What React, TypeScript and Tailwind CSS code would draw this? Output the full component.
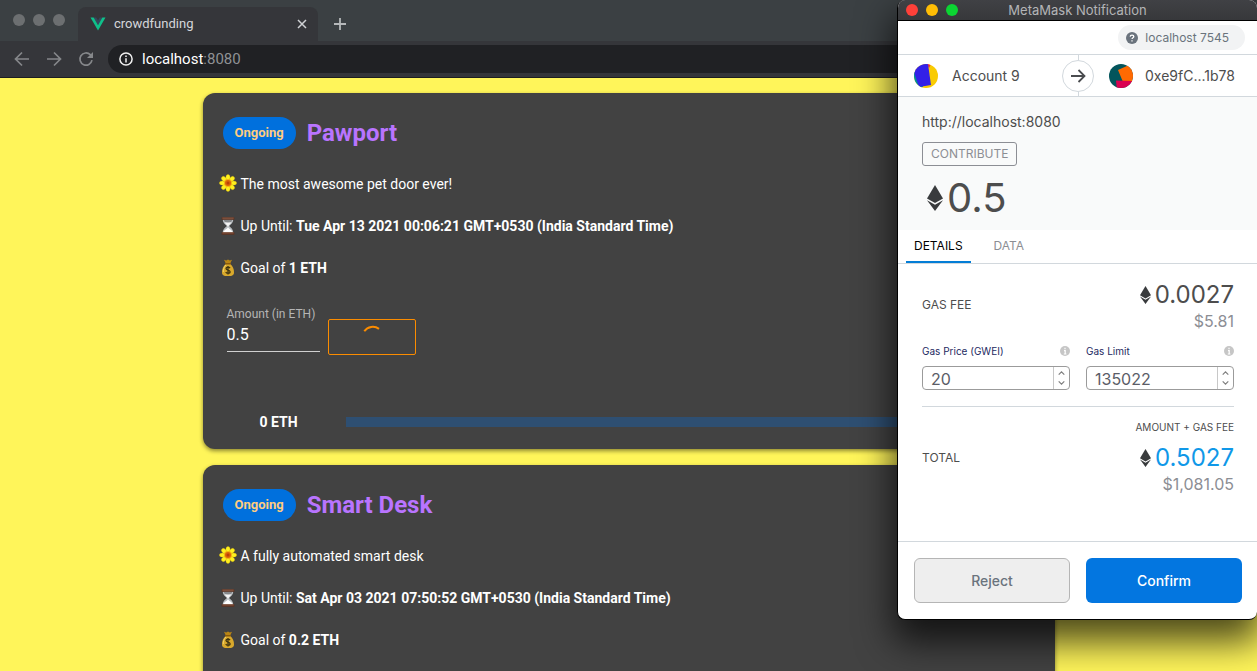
import { useId, useState } from "react";
import type { ReactNode } from "react";

function VueLogo() {
  return (
    <svg className="h-3.5 w-4" viewBox="0 0 16 14" aria-hidden="true">
      <path d="M3.4 0.5H6.2L8 3.6L9.8 0.5H12.6L8 8.4Z" fill="#35495e" />
      <path d="M0.5 0.5H3.6L8 8.2L12.4 0.5H15.5L8 13.5Z" fill="#0fc08a" />
    </svg>
  );
}

function Sunflower() {
  const petals = [0, 45, 90, 135, 180, 225, 270, 315];
  return (
    <svg className="mb-0.5 h-[18px] w-[18px] shrink-0" viewBox="0 0 18 18" aria-hidden="true">
      {petals.map((a) => (
        <ellipse key={a} cx="9" cy="3.4" rx="2.1" ry="3" fill="#fdf01f" stroke="#d9ae00" strokeWidth="0.3" transform={`rotate(${a} 9 9)`} />
      ))}
      <circle cx="9" cy="9" r="4" fill="#f5b414" />
      <circle cx="9" cy="9" r="3" fill="#d9630a" />
      <circle cx="9" cy="9" r="1.5" fill="#b8400a" />
    </svg>
  );
}

function Hourglass() {
  return (
    <svg className="h-[18px] w-[18px] shrink-0" viewBox="0 0 18 18" aria-hidden="true">
      <path d="M3.8 2.5H14.2C14.2 6 11.8 7.2 10.2 9C11.8 10.8 14.2 12 14.2 15.5H3.8C3.8 12 6.2 10.8 7.8 9C6.2 7.2 3.8 6 3.8 2.5Z" fill="#b9bdc0" />
      <path d="M4.8 2.9H13.2C13 4.4 11.5 5.4 9 6C6.5 5.4 5 4.4 4.8 2.9Z" fill="#85888b" />
      <path d="M5.6 5.4H12.4C11 7.6 9.8 8 9.4 9.4H8.6C8.2 8 7 7.6 5.6 5.4Z" fill="#f4f4f4" />
      <path d="M4.2 15.5C4.6 13 7.6 12.6 9 10.2C10.4 12.6 13.4 13 13.8 15.5Z" fill="#ffffff" />
      <rect x="2.6" y="0.2" width="12.8" height="2.6" rx="0.6" fill="#5f3322" />
      <rect x="3.4" y="0.7" width="11.2" height="0.8" fill="#9a6a54" />
      <rect x="2.6" y="15.2" width="12.8" height="2.6" rx="0.6" fill="#5f3322" />
      <rect x="3.4" y="15.5" width="11.2" height="0.8" fill="#9a6a54" />
    </svg>
  );
}

function MoneyBag() {
  return (
    <svg className="h-[18px] w-[18px] shrink-0" viewBox="0 0 18 18" aria-hidden="true">
      <path d="M5 0.8L7.2 1.6L9 0.6L10.8 1.6L13 0.8L11.2 4.4H6.8Z" fill="#b98514" />
      <path d="M6.6 5H11.4C13.6 7 15.2 10 15 13.4C14.9 16 13.4 17 9 17C4.6 17 3.1 16 3 13.4C2.8 10 4.4 7 6.6 5Z" fill="#d9a92c" />
      <path d="M6.8 6C5 8 4.2 10.4 4.3 13" fill="none" stroke="#f4d774" strokeWidth="0.9" />
      <rect x="6" y="4" width="6" height="1.4" rx="0.7" fill="#8a5a0c" />
      <path d="M11 9.1C10.6 8.4 9.9 8.1 9 8.1C7.8 8.1 7 8.7 7 9.6C7 11.6 11.1 10.6 11.1 12.7C11.1 13.7 10.2 14.3 9 14.3C7.9 14.3 7.1 13.9 6.8 13M9 7V15.4" fill="none" stroke="#3f3410" strokeWidth="1.3" />
    </svg>
  );
}

function EthMark({ className }: { className: string }) {
  return (
    <svg className={className} viewBox="0 0 16 26" aria-hidden="true">
      <path d="M8 0L16 13.4L8 18L0 13.4Z" fill="#393b3d" />
      <path d="M0 15.2L8 19.8L16 15.2L8 26Z" fill="#393b3d" />
    </svg>
  );
}

function BrowserBar() {
  return (
    <header className="shrink-0 border-b border-[#1d1e20] bg-[#35363a] font-[Inter,sans-serif]">
      <div className="flex h-[41px] items-end bg-[#3b4043] pl-[13px]">
        <div className="flex h-full items-center gap-2 pb-px pr-[13px]">
          <span className="h-3 w-3 rounded-full bg-[#6c6f71]" />
          <span className="h-3 w-3 rounded-full bg-[#6c6f71]" />
          <span className="h-3 w-3 rounded-full bg-[#6c6f71]" />
        </div>
        <div className="flex h-[34px] w-[240px] items-center gap-2 rounded-t-lg bg-[#35363a] pl-3 pr-[10px]">
          <VueLogo />
          <span className="flex-1 font-[Roboto,sans-serif] text-[13px] text-[#d5d7da]">crowdfunding</span>
          <button aria-label="Close tab" className="text-[#d0d2d5]">
            <svg className="h-3 w-3" viewBox="0 0 12 12"><path d="M2 2L10 10M10 2L2 10" stroke="currentColor" strokeWidth="1.5" /></svg>
          </button>
        </div>
        <button aria-label="New tab" className="mb-[11px] ml-4 text-[#b5b8ba]">
          <svg className="h-3 w-3" viewBox="0 0 12 12"><path d="M6 0V12M0 6H12" stroke="currentColor" strokeWidth="1.8" /></svg>
        </button>
      </div>
      <div className="flex h-9 items-center gap-4 pl-[14px] text-[#85878a]">
        <button aria-label="Back">
          <svg className="h-4 w-4" viewBox="0 0 16 16"><path d="M15 8H2M8 1.5L1.5 8L8 14.5" fill="none" stroke="currentColor" strokeWidth="1.7" /></svg>
        </button>
        <button aria-label="Forward">
          <svg className="h-4 w-4" viewBox="0 0 16 16"><path d="M1 8H14M8 1.5L14.5 8L8 14.5" fill="none" stroke="currentColor" strokeWidth="1.7" /></svg>
        </button>
        <button aria-label="Reload">
          <svg className="h-4 w-4" viewBox="0 0 16 16"><path d="M14 9.2A6.1 6.1 0 1 1 12.3 3.7L13.6 5" fill="none" stroke="currentColor" strokeWidth="1.7" /><path d="M15 1V7H9Z" fill="currentColor" /></svg>
        </button>
        <a href="#" className="-ml-0.5 flex h-7 flex-1 items-center gap-[9px] rounded-l-full bg-[#202124] pl-[11px] text-[15px] text-[#8f9194] no-underline">
          <svg className="h-[14px] w-[14px]" viewBox="0 0 14 14"><circle cx="7" cy="7" r="6.1" fill="none" stroke="#f1f1f1" strokeWidth="1.5" /><path d="M7 6.2V10.4M7 3.4V5" stroke="#f1f1f1" strokeWidth="1.5" /></svg>
          <span className="font-[Roboto,sans-serif]"><span className="text-white">localhost</span>:8080</span>
        </a>
      </div>
    </header>
  );
}

type Project = { title: string; about: string; until: string; goal: string };

function InfoRow({ icon, children }: { icon: ReactNode; children: ReactNode }) {
  return (
    <p className="flex h-[42px] items-center gap-1">
      {icon}
      <span>{children}</span>
    </p>
  );
}

function FundForm() {
  const id = useId();
  const [amount, setAmount] = useState("0.5");
  return (
    <>
      <form className="flex items-end gap-2 pl-2 pt-[17px]" onSubmit={(e) => e.preventDefault()}>
        <div className="flex w-[93px] flex-col border-b border-[#d0d0d0]">
          <label htmlFor={id} className="text-xs leading-4 text-[#b5b5b5]">Amount (in ETH)</label>
          <input id={id} value={amount} onChange={(e) => setAmount(e.target.value)} className="h-[29px] w-full bg-transparent pb-1 text-base text-white outline-none" />
        </div>
        <button aria-label="Fund" className="-mb-[3px] flex h-9 w-[88px] justify-center rounded-[2px] border border-[#fb8c00] pt-[5px]">
          <svg className="h-6 w-6" viewBox="0 0 24 24"><path d="M4.3 6.3A10.4 10.4 0 0 1 19 3.9" fill="none" stroke="#fb8c00" strokeWidth="2" /></svg>
        </button>
      </form>
      <div className="mt-[55px] flex h-[30px] items-center">
        <b className="w-[127px] pl-[41px]">0 ETH</b>
        <div role="progressbar" aria-label="Funding progress" aria-valuenow={0} className="h-[10px] flex-1 bg-[#2e4f72]" />
      </div>
    </>
  );
}

function ProjectCard({ project, children }: { project: Project; children?: ReactNode }) {
  return (
    <article className="rounded-xl bg-[#424242] px-4 pb-3 pt-6 text-sm text-white shadow-[0_2px_4px_rgba(0,0,0,0.45)]">
      <div className="mb-[14px] flex items-center gap-[11px] pl-1">
        <span className="flex h-8 items-center rounded-full bg-[#0070dd] px-3 text-[13px] font-bold text-[#ffcc80]">Ongoing</span>
        <h2 className="text-2xl font-bold text-[#b974ff]">{project.title}</h2>
      </div>
      <InfoRow icon={<Sunflower />}>{project.about}</InfoRow>
      <InfoRow icon={<Hourglass />}>Up Until: <b>{project.until}</b></InfoRow>
      <InfoRow icon={<MoneyBag />}>Goal of <b>{project.goal}</b></InfoRow>
      {children ?? <div className="h-40" />}
    </article>
  );
}

function GasField({ label, initial }: { label: string; initial: string }) {
  const id = useId();
  const [value, setValue] = useState(initial);
  const step = (d: number) => setValue(String(Number(value) + d));
  return (
    <div className="min-w-0 flex-1">
      <div className="flex h-4 items-center justify-between">
        <label htmlFor={id} className="text-[10px] text-[#24295f]">{label}</label>
        <svg className="h-[10px] w-[10px]" viewBox="0 0 10 10" aria-hidden="true"><circle cx="5" cy="5" r="5" fill="#c6c6c6" /><path d="M5 1.8V3.2M4 4.6H5.2V8M3.8 8H6.4" fill="none" stroke="#fff" strokeWidth="1.2" /></svg>
      </div>
      <div className="mt-[7px] flex h-6 rounded border border-[#9b9b9b]">
        <input id={id} value={value} onChange={(e) => setValue(e.target.value)} className="min-w-0 flex-1 bg-transparent pl-2 pt-0.5 text-base text-[#5b5d67] outline-none" />
        <div className="flex w-4 flex-col items-center justify-between border-l border-[#c8c8c8] py-1 text-[#808080]">
          <button type="button" aria-label={`Increase ${label}`} onClick={() => step(1)} className="flex">
            <svg className="h-1 w-[7px]" viewBox="0 0 7 4"><path d="M0.7 3.6L3.5 0.9L6.3 3.6" fill="none" stroke="currentColor" strokeWidth="1.2" /></svg>
          </button>
          <button type="button" aria-label={`Decrease ${label}`} onClick={() => step(-1)} className="flex">
            <svg className="h-1 w-[7px]" viewBox="0 0 7 4"><path d="M0.7 0.4L3.5 3.1L6.3 0.4" fill="none" stroke="currentColor" strokeWidth="1.2" /></svg>
          </button>
        </div>
      </div>
    </div>
  );
}

function AccountBadge({ kind }: { kind: "from" | "to" }) {
  const clip = useId();
  return (
    <svg className="h-6 w-6 shrink-0" viewBox="0 0 24 24" aria-hidden="true">
      <clipPath id={clip}><circle cx="12" cy="12" r="12" /></clipPath>
      <g clipPath={`url(#${clip})`}>
        {kind === "from" ? (
          <>
            <rect width="24" height="24" fill="#f9cb02" />
            <path d="M-1 8L3 8L9 23L0 25Z" fill="#018e95" />
            <path d="M13 0H17L15 4Z" fill="#f2303a" />
            <path d="M-1 5L5 -1L14 0L17 21L5 23Z" fill="#3320e8" />
          </>
        ) : (
          <>
            <rect width="24" height="24" fill="#03555c" />
            <path d="M9 6L20 1L26 8V18H14Z" fill="#ff6a02" />
            <path d="M7 16.5L26 17V26H8Z" fill="#da0151" />
          </>
        )}
      </g>
    </svg>
  );
}

function WalletPopup() {
  return (
    <section aria-label="MetaMask Notification" className="absolute right-0 top-0 w-[360px] overflow-hidden rounded-lg border-b border-l border-black bg-white font-[Inter,sans-serif] text-[#4d4d4d] shadow-[0_18px_36px_4px_rgba(0,0,0,0.7)]">
      <div className="grid h-[21px] grid-cols-[1fr_auto_1fr] items-center border-b border-black bg-linear-to-b from-[#404145] to-[#37383b] px-2">
        <div className="flex gap-2">
          <span className="h-3 w-3 rounded-full bg-[#ff4039]" />
          <span className="h-3 w-3 rounded-full bg-[#ffbd05]" />
          <span className="h-3 w-3 rounded-full bg-[#0bd532]" />
        </div>
        <h1 className="pt-px text-[13px] text-[#b4b5b7]">MetaMask Notification</h1>
      </div>

      <div className="flex h-[34px] items-center justify-end border-b border-[#d2d8dd] pr-3">
        <div className="flex h-[25px] items-center gap-[7px] rounded-full bg-[#f2f3f4] pl-2 pr-4 text-xs text-[#6a737d]">
          <svg className="h-3 w-3" viewBox="0 0 12 12" aria-hidden="true"><circle cx="6" cy="6" r="6" fill="#6a737d" /><path d="M4.2 4.6C4.3 2.5 7.8 2.5 7.8 4.6C7.8 5.8 6 5.7 6 7.1M6 8.2V9.6" fill="none" stroke="#fff" strokeWidth="1.3" /></svg>
          <span>localhost 7545</span>
        </div>
      </div>

      <div className="flex h-[42px] items-center border-b border-[#d2d8dd] text-sm">
        <div className="flex flex-1 items-center gap-[14px] pl-4">
          <AccountBadge kind="from" />
          <span>Account 9</span>
        </div>
        <div className="flex h-full flex-col items-center">
          <span className="w-px flex-1 bg-[#d2d8dd]" />
          <span className="flex h-8 w-8 items-center justify-center rounded-full border border-[#d2d8dd]">
            <svg className="h-4 w-4" viewBox="0 0 16 16" aria-hidden="true"><path d="M1 8H14.5M8.5 2L14.5 8L8.5 14" fill="none" stroke="#4a4c4f" strokeWidth="1.8" /></svg>
          </span>
          <span className="w-px flex-1 bg-[#d2d8dd]" />
        </div>
        <div className="flex flex-1 items-center gap-3 pl-[15px]">
          <AccountBadge kind="to" />
          <span>0xe9fC...1b78</span>
        </div>
      </div>

      <div className="h-[133px] bg-[#f9fafa] px-6 pt-4">
        <p className="text-sm leading-[18px]">http://localhost:8080</p>
        <span className="mt-[11px] flex h-6 w-fit items-center rounded-[3px] border border-[#8c8e94] px-2 text-xs text-[#8c8e94]">CONTRIBUTE</span>
        <div className="mt-3 flex items-center gap-1 pl-[5px]">
          <EthMark className="h-[26px] w-4" />
          <span className="text-[40px] leading-10">0.5</span>
        </div>
      </div>

      <div className="flex h-[34px] border-b border-[#d2d8dd] pl-2 text-xs">
        <button className="border-b-2 border-[#037dd6] px-2 text-black">DETAILS</button>
        <button className="ml-[7px] border-b-2 border-transparent px-4 text-[#8c8e94]">DATA</button>
      </div>

      <div className="pl-6 pr-[23px]">
        <div className="flex items-start justify-between pb-[10px] pt-[17px]">
          <span className="pt-4 text-xs">GAS FEE</span>
          <div className="text-right">
            <div className="flex items-center justify-end gap-1 text-2xl leading-7">
              <EthMark className="h-[18px] w-[11px]" />
              <span>0.0027</span>
            </div>
            <div className="text-base leading-6 text-[#8c8e94]">$5.81</div>
          </div>
        </div>
        <div className="flex gap-4 pb-4">
          <GasField label="Gas Price (GWEI)" initial="20" />
          <GasField label="Gas Limit" initial="135022" />
        </div>
        <div className="border-t border-[#d2d8dd] pt-[14px]">
          <p className="text-right text-[10px] leading-3">AMOUNT + GAS FEE</p>
          <div className="mt-[11px] flex items-start justify-between">
            <span className="text-xs leading-7">TOTAL</span>
            <div className="text-right">
              <div className="flex items-center justify-end gap-1 text-2xl leading-7 text-[#1098e8]">
                <EthMark className="h-[18px] w-[11px]" />
                <span>0.5027</span>
              </div>
              <div className="text-base leading-6 text-[#8c8e94]">$1,081.05</div>
            </div>
          </div>
        </div>
      </div>

      <div className="mt-[45px] grid grid-cols-2 gap-4 border-t border-[#d2d8dd] py-4 pl-4 pr-[15px] text-sm font-medium">
        <button className="h-[45px] rounded-md border border-[#b5b5b5] bg-[#eeeeee] text-[#6a737d]">Reject</button>
        <button className="h-[45px] rounded-md bg-[#0376e0] text-white">Confirm</button>
      </div>
    </section>
  );
}

const pawport: Project = {
  title: "Pawport",
  about: "The most awesome pet door ever!",
  until: "Tue Apr 13 2021 00:06:21 GMT+0530 (India Standard Time)",
  goal: "1 ETH",
};

const smartDesk: Project = {
  title: "Smart Desk",
  about: "A fully automated smart desk",
  until: "Sat Apr 03 2021 07:50:52 GMT+0530 (India Standard Time)",
  goal: "0.2 ETH",
};

export default function App() {
  return (
    <div className="relative flex h-screen flex-col overflow-hidden bg-[#fff55a]">
      <BrowserBar />
      <main className="mx-auto flex min-h-0 w-full max-w-[852px] flex-1 flex-col gap-4 pt-[15px] font-[Roboto,sans-serif] *:shrink-0">
        <ProjectCard project={pawport}>
          <FundForm />
        </ProjectCard>
        <ProjectCard project={smartDesk} />
      </main>
      <WalletPopup />
    </div>
  );
}
